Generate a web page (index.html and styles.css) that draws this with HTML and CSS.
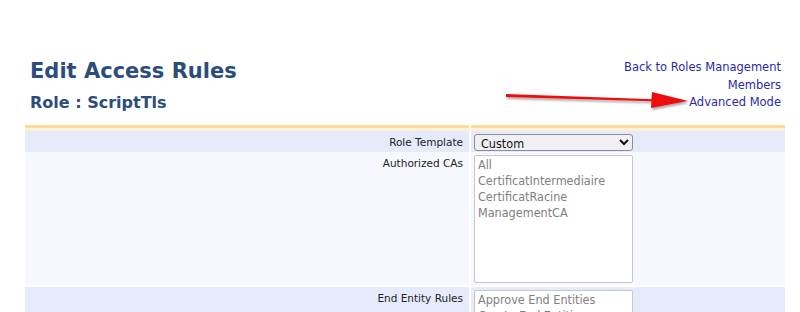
FILE: index.html
```html
<!DOCTYPE html>
<html lang="en">
<head>
    <meta charset="UTF-8">
    <title>Edit Access Rules</title>
    <link rel="stylesheet" href="styles.css">
</head>
<body>
    <div id="page">
        <div class="header">
            <div>
                <h1>Edit Access Rules</h1>
                <h2>Role : ScriptTls</h2>
            </div>
            <div class="links">
                <a href="#">Back to Roles Management</a>
                <a href="#">Members</a>
                <a href="#">Advanced Mode</a>
            </div>
        </div>

        <table class="rules">
            <tr class="head">
                <td></td>
                <td></td>
            </tr>
            <tr class="row-a">
                <td class="label">Role Template</td>
                <td>
                    <select class="template">
                        <option>Custom</option>
                    </select>
                </td>
            </tr>
            <tr class="row-b">
                <td class="label">Authorized CAs</td>
                <td>
                    <div class="listbox tall">
                        <div>All</div>
                        <div>CertificatIntermediaire</div>
                        <div>CertificatRacine</div>
                        <div>ManagementCA</div>
                    </div>
                </td>
            </tr>
            <tr class="row-a">
                <td class="label">End Entity Rules</td>
                <td>
                    <div class="listbox">
                        <div>Approve End Entities</div>
                        <div>Create End Entities</div>
                    </div>
                </td>
            </tr>
        </table>

        <!-- annotation arrow -->
        <svg class="arrow" width="200" height="30" viewBox="0 0 200 30">
            <defs>
                <filter id="shadow" x="-10%" y="-50%" width="120%" height="200%">
                    <feDropShadow dx="1" dy="2" stdDeviation="1.2" flood-color="#000" flood-opacity="0.35"/>
                </filter>
            </defs>
            <g filter="url(#shadow)">
                <polygon points="4,8 158,13.5 158,15.5 4,11" fill="#ee1111"/>
                <polygon points="150,6 186,15 149,22" fill="#ee1111"/>
            </g>
        </svg>
    </div>
</body>
</html>
```

FILE: styles.css
```css
body {
    margin: 0;
    font-family: "DejaVu Sans", Verdana, sans-serif;
    background-color: white;
    overflow: hidden;
}

#page {
    position: relative;
    padding: 55px 15px 0 25px;
}

.header {
    display: flex;
    justify-content: space-between;
    align-items: flex-start;
    padding: 0 4px 0 5px;
    height: 70px;
}

h1 {
    margin: 4px 0 0 0;
    font-size: 21px;
    font-weight: bold;
    color: #2c4d7c;
}

h2 {
    margin: 10px 0 0 0;
    font-size: 16px;
    font-weight: bold;
    color: #2c4d7c;
}

.links {
    display: flex;
    flex-direction: column;
    align-items: flex-end;
    margin-top: 4px;
}

.links a {
    font-size: 11.5px;
    line-height: 17.5px;
    color: #2a2aa8;
    text-decoration: none;
}

.rules {
    width: 760px;
    table-layout: fixed;
    border-collapse: separate;
    border-spacing: 0;
    font-family: "DejaVu Sans Condensed", "DejaVu Sans", sans-serif;
}

.rules td {
    padding: 0;
    vertical-align: top;
}

.rules td:first-child {
    width: 444px;
    border-right: 2px solid white;
}

.head td {
    height: 3px;
    background-color: #fddc9a;
    border-bottom: 3px solid #fdf0d8;
}

.row-a td {
    background-color: #e6ebfc;
}

.row-b td {
    background-color: #f7f8fd;
    border-bottom: 2px solid white;
}

.label {
    text-align: right;
    font-family: "DejaVu Sans", sans-serif;
    font-size: 10.5px;
    color: #222;
    padding: 5px 6px 0 0 !important;
}

.template {
    display: block;
    margin: 3px 0 1px 3px;
    width: 159px;
    height: 17px;
    font-family: "DejaVu Sans Condensed", "DejaVu Sans", sans-serif;
    font-size: 12.5px;
    padding: 0 2px;
    border: 1px solid #8c8c96;
    border-radius: 3px;
    background-color: #f0f0f4;
    color: #111;
}

.listbox {
    margin: 3px 0 2px 3px;
    width: 151px;
    height: 115px;
    padding: 1px 3px 8px 3px;
    border: 1px solid #c6c6cc;
    border-radius: 2px;
    background-color: white;
    font-size: 12.5px;
    line-height: 16px;
    color: #808080;
}

.listbox.tall {
    height: 117px;
}

.arrow {
    position: absolute;
    left: 502px;
    top: 86px;
}
```
